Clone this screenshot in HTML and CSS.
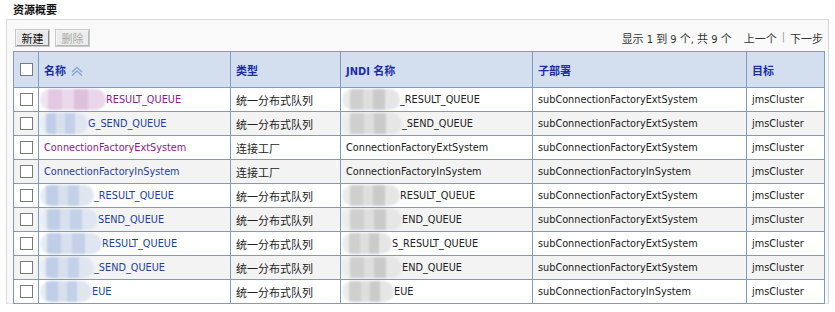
FILE: index.html
```html
<!DOCTYPE html>
<html lang="zh">
<head>
<meta charset="utf-8">
<link rel="stylesheet" href="styles.css">
</head>
<body>
<div class="title">资源概要</div>
<div class="panel">
  <div class="toolbar">
    <div class="buttons">
      <button class="btn">新建</button>
      <button class="btn disabled">删除</button>
    </div>
    <div class="pager">
      <span>显示 1 到 9 个, 共 9 个</span>
      <span class="nav">上一个</span><span class="sep">|</span><span>下一步</span>
    </div>
  </div>
  <table class="grid">
    <colgroup>
      <col class="c-chk"><col class="c-name"><col class="c-type"><col class="c-jndi"><col class="c-sub"><col class="c-tgt">
    </colgroup>
    <thead>
      <tr>
        <th class="chk"><span class="box"></span></th>
        <th>名称 <svg class="sort" width="14" height="10" viewBox="0 0 14 10"><path d="M2 6 L7 1.5 L12 6" fill="none" stroke="#8fa8d0" stroke-width="1.6"/><path d="M2 9.5 L7 5 L12 9.5" fill="none" stroke="#8fa8d0" stroke-width="1.6"/></svg></th>
        <th>类型</th>
        <th>JNDI 名称</th>
        <th>子部署</th>
        <th>目标</th>
      </tr>
    </thead>
    <tbody>
      <tr>
        <td class="chk"><span class="box"></span></td>
        <td><a class="visited"><span class="blur purple w66"></span>RESULT_QUEUE</a></td>
        <td class="cjk">统一分布式队列</td>
        <td><span class="blur gray w58"></span>_RESULT_QUEUE</td>
        <td>subConnectionFactoryExtSystem</td>
        <td>jmsCluster</td>
      </tr>
      <tr class="alt">
        <td class="chk"><span class="box"></span></td>
        <td><a><span class="blur blue w48"></span>G_SEND_QUEUE</a></td>
        <td class="cjk">统一分布式队列</td>
        <td><span class="blur gray w60"></span>_SEND_QUEUE</td>
        <td>subConnectionFactoryExtSystem</td>
        <td>jmsCluster</td>
      </tr>
      <tr>
        <td class="chk"><span class="box"></span></td>
        <td><a class="visited">ConnectionFactoryExtSystem</a></td>
        <td class="cjk">连接工厂</td>
        <td>ConnectionFactoryExtSystem</td>
        <td>subConnectionFactoryExtSystem</td>
        <td>jmsCluster</td>
      </tr>
      <tr class="alt">
        <td class="chk"><span class="box"></span></td>
        <td><a>ConnectionFactoryInSystem</a></td>
        <td class="cjk">连接工厂</td>
        <td>ConnectionFactoryInSystem</td>
        <td>subConnectionFactoryInSystem</td>
        <td>jmsCluster</td>
      </tr>
      <tr>
        <td class="chk"><span class="box"></span></td>
        <td><a><span class="blur blue w54"></span>_RESULT_QUEUE</a></td>
        <td class="cjk">统一分布式队列</td>
        <td><span class="blur gray w58"></span>RESULT_QUEUE</td>
        <td>subConnectionFactoryExtSystem</td>
        <td>jmsCluster</td>
      </tr>
      <tr class="alt">
        <td class="chk"><span class="box"></span></td>
        <td><a><span class="blur blue w58"></span>SEND_QUEUE</a></td>
        <td class="cjk">统一分布式队列</td>
        <td><span class="blur gray w60"></span>END_QUEUE</td>
        <td>subConnectionFactoryExtSystem</td>
        <td>jmsCluster</td>
      </tr>
      <tr>
        <td class="chk"><span class="box"></span></td>
        <td><a><span class="blur blue w62"></span>RESULT_QUEUE</a></td>
        <td class="cjk">统一分布式队列</td>
        <td><span class="blur gray w50"></span>S_RESULT_QUEUE</td>
        <td>subConnectionFactoryExtSystem</td>
        <td>jmsCluster</td>
      </tr>
      <tr class="alt">
        <td class="chk"><span class="box"></span></td>
        <td><a><span class="blur blue w54"></span>_SEND_QUEUE</a></td>
        <td class="cjk">统一分布式队列</td>
        <td><span class="blur gray w60"></span>END_QUEUE</td>
        <td>subConnectionFactoryExtSystem</td>
        <td>jmsCluster</td>
      </tr>
      <tr>
        <td class="chk"><span class="box"></span></td>
        <td><a><span class="blur blue w52"></span>EUE</a></td>
        <td class="cjk">统一分布式队列</td>
        <td><span class="blur gray w52"></span>EUE</td>
        <td>subConnectionFactoryInSystem</td>
        <td>jmsCluster</td>
      </tr>
    </tbody>
  </table>
</div>
</body>
</html>
```

FILE: styles.css
```css
html, body {
  margin: 0;
  padding: 0;
  background: #ffffff;
}
body {
  font-family: "DejaVu Sans Condensed", "DejaVu Sans", "Noto Sans CJK SC", sans-serif;
  font-size: 10.8px;
  color: #222;
}
.title {
  height: 19px;
  line-height: 18px;
  padding-left: 13px;
  font-weight: bold;
  font-size: 11px;
  font-family: "Noto Sans CJK SC", sans-serif;
  color: #111;
}
.panel {
  margin-left: 6px;
  width: 823px;
  height: 285px;
  border-top: 1px solid #dcdcdc;
  border-left: 1px solid #dcdcdc;
  border-right: 1px solid #d4d4d4;
  border-bottom: 1px solid #e4e4e4;
  background: #f9f9f9;
  padding: 0 4px 0 6px;
  box-sizing: border-box;
}
.toolbar {
  display: flex;
  justify-content: space-between;
  align-items: center;
  height: 31px;
  padding-top: 1px;
  box-sizing: border-box;
}
.buttons {
  display: flex;
  gap: 7px;
  padding-left: 3px;
  margin-top: 3px;
}
.btn {
  font-family: "Noto Sans CJK SC", sans-serif;
  font-size: 11px;
  height: 16px;
  width: 33px;
  padding: 0;
  line-height: 14px;
  background: #e9e9e9;
  border: 1px solid;
  border-color: #f4f4f4 #8a8a8a #8a8a8a #f4f4f4;
  box-shadow: 0 0 0 1px #c8c8c8;
  color: #111;
}
.btn.disabled {
  color: #a8a8a8;
  background: #ececec;
  border-color: #f6f6f6 #b8b8b8 #b8b8b8 #f6f6f6;
}
.pager {
  display: flex;
  padding-right: 1px;
  margin-top: 4px;
  color: #333;
  font-size: 11px;
}
.pager .nav {
  margin-left: 12px;
}
.pager .sep {
  color: #999;
  margin: 0 5px;
}
.grid {
  border-collapse: collapse;
  width: 811px;
  table-layout: fixed;
  background: #fff;
}
.c-chk { width: 25px; }
.c-name { width: 192px; }
.c-type { width: 110px; }
.c-jndi { width: 192px; }
.c-sub { width: 214px; }
.c-tgt { width: 78px; }
.grid th, .grid td {
  border: 1px solid #7f9bc2;
  text-align: left;
  padding: 0 0 0 5px;
  white-space: nowrap;
  overflow: hidden;
}
.grid th {
  height: 35px;
  background: #d3dfef;
  color: #1b2ea6;
  font-weight: bold;
  font-size: 11px;
}
.grid td {
  height: 23px;
  color: #222;
}
.grid tr.alt td {
  background: #f3f3f3;
}
.grid .chk {
  padding: 0;
  text-align: center;
}
.box {
  display: inline-block;
  width: 11px;
  height: 11px;
  border: 1px solid #7a7a7a;
  background: #fff;
  vertical-align: middle;
}
.sort {
  vertical-align: -1px;
  margin-left: 1px;
}
.cjk {
  font-family: "Noto Sans CJK SC", sans-serif;
  font-size: 11px;
}
a {
  color: #1d3f9e;
  text-decoration: none;
}
a.visited {
  color: #8a1a8a;
}
.blur {
  display: inline-block;
  height: 21px;
  vertical-align: middle;
  border-radius: 11px;
  margin-left: -4px;
  filter: blur(1.2px);
}
.purple {
  background: linear-gradient(90deg, #f0e4f0 0 12%, #e2c8e2 12% 34%, #ecd8ec 34% 52%, #dcc0dc 52% 72%, #ead6ea 72% 100%);
}
.blue {
  background: linear-gradient(90deg, #e6ecf5 0 12%, #c0cde6 12% 34%, #d8e0ee 34% 52%, #c4d0e8 52% 72%, #e0e6f1 72% 100%);
}
.gray {
  background: linear-gradient(90deg, #ececec 0 14%, #cfcfcf 14% 36%, #dedede 36% 54%, #cacaca 54% 74%, #e6e6e6 74% 100%);
}
.w48 { width: 48px; }
.w50 { width: 50px; }
.w52 { width: 52px; }
.w54 { width: 54px; }
.w58 { width: 58px; }
.w60 { width: 60px; }
.w62 { width: 62px; }
.w66 { width: 66px; }
```
